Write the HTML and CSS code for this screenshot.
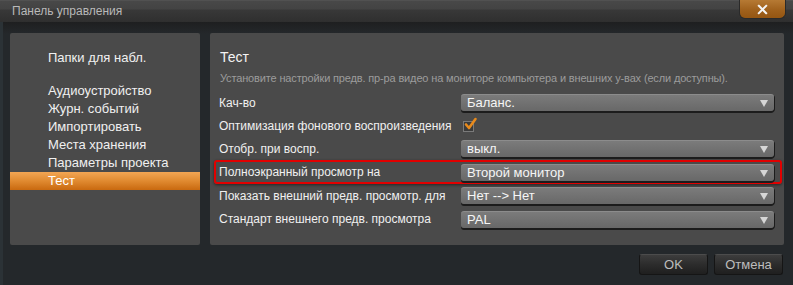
FILE: index.html
```html
<!DOCTYPE html>
<html lang="ru">
<head>
    <meta charset="UTF-8">
    <title>Панель управления</title>
    <link rel="stylesheet" href="styles.css">
</head>
<body>
    <div class="window">
        <div class="titlebar">
            <span class="title">Панель управления</span>
            <button class="close-btn" type="button">
                <svg width="11" height="11" viewBox="0 0 12 12"><path d="M2 2 L10 10 M10 2 L2 10" stroke="#f4f4f4" stroke-width="2.2" stroke-linecap="square"/></svg>
            </button>
        </div>

        <div class="content">
            <div class="panel nav">
                <div class="nav-item nav-first">Папки для набл.</div>
                <div class="nav-item">Аудиоустройство</div>
                <div class="nav-item">Журн. событий</div>
                <div class="nav-item">Импортировать</div>
                <div class="nav-item">Места хранения</div>
                <div class="nav-item">Параметры проекта</div>
                <div class="nav-item active">Тест</div>
            </div>

            <div class="panel settings">
                <h2>Тест</h2>
                <p class="desc">Установите настройки предв. пр-ра видео на мониторе компьютера и внешних у-вах (если доступны).</p>

                <div class="row">
                    <span class="label">Кач-во</span>
                    <div class="select">Баланс.</div>
                </div>
                <div class="row">
                    <span class="label">Оптимизация фонового воспроизведения</span>
                    <span class="checkbox">
                        <svg width="16" height="16" viewBox="0 0 16 16"><path d="M4 8.5 L7 12 L13.5 3" fill="none" stroke="#e88a1c" stroke-width="2.6" stroke-linecap="round" stroke-linejoin="round"/></svg>
                    </span>
                </div>
                <div class="row">
                    <span class="label">Отобр. при воспр.</span>
                    <div class="select">выкл.</div>
                </div>
                <div class="row row-tall highlight">
                    <span class="label">Полноэкранный просмотр на</span>
                    <div class="select">Второй монитор</div>
                </div>
                <div class="row">
                    <span class="label">Показать внешний предв. просмотр. для</span>
                    <div class="select">Нет --&gt; Нет</div>
                </div>
                <div class="row row-tall">
                    <span class="label">Стандарт внешнего предв. просмотра</span>
                    <div class="select">PAL</div>
                </div>
            </div>
        </div>

        <div class="footer">
            <button class="btn" type="button">OK</button>
            <button class="btn" type="button">Отмена</button>
        </div>
    </div>
</body>
</html>
```

FILE: styles.css
```css
* {
    margin: 0;
    padding: 0;
    box-sizing: border-box;
}

body {
    font-family: 'Liberation Sans', Arial, sans-serif;
    background: #24282b;
    width: 793px;
    height: 285px;
    overflow: hidden;
}

.window {
    height: 285px;
    background: linear-gradient(#1e1f20 22px, #24282b 34px);
    border-left: 3px solid #2b3236;
}

.titlebar {
    height: 22px;
    display: flex;
    align-items: flex-start;
    justify-content: space-between;
    background: linear-gradient(#5a5a5a 0, #484848 1px, #434343 9px, #383838 10px, #2f2f2f 22px);
    margin-left: -3px;
}

.title {
    color: #b9b9b9;
    font-size: 12px;
    line-height: 22px;
    padding-left: 12px;
}

.close-btn {
    width: 47px;
    height: 19px;
    margin-right: 7px;
    border: 1px solid #2a2a2a;
    border-top: none;
    border-radius: 0 0 6px 6px;
    background: linear-gradient(#b67a34, #a0611c 55%, #955612);
    display: flex;
    align-items: center;
    justify-content: center;
}

.content {
    display: flex;
    gap: 10px;
    padding: 11px 9px 0 7px;
}

.panel {
    background: #4a4a4a;
    border-radius: 2px;
    height: 212px;
}

.nav {
    width: 190px;
    padding-top: 16px;
}

.nav-item {
    color: #f0f0f0;
    font-size: 13px;
    line-height: 18px;
    padding-left: 38px;
}

.nav-first {
    margin-bottom: 15px;
}

.nav-item.active {
    color: #fff;
    background: linear-gradient(#f3a654, #e08a30 50%, #c9690f);
    height: 18px;
}

.settings {
    flex: 1;
    padding: 15px 2px 0 4px;
}

.settings h2 {
    color: #f4f4f4;
    font-size: 14px;
    font-weight: normal;
    line-height: 18px;
    padding-left: 6px;
    margin-bottom: 5px;
}

.desc {
    color: #9c9c9c;
    font-size: 11px;
    letter-spacing: -0.15px;
    line-height: 14px;
    padding-left: 6px;
    margin-bottom: 6px;
}

.row {
    height: 23px;
    display: flex;
    align-items: center;
    border: 2px solid transparent;
    border-radius: 3px;
    padding: 0 6px 0 3px;
}

.row-tall {
    height: 24px;
}

.row.highlight {
    border-color: #e10000;
    box-shadow: 0 1px 3px rgba(0, 0, 0, 0.5);
}

.label {
    width: 242px;
    color: #f0f0f0;
    font-size: 12px;
    white-space: nowrap;
}

.select {
    position: relative;
    flex: 1;
    height: 17px;
    line-height: 16px;
    padding-left: 6px;
    color: #f6f6f6;
    font-size: 13px;
    border-radius: 3px;
    border-top: 1px solid #8c8c8c;
    background: linear-gradient(#7b7b7b, #686868);
    box-shadow: 0 2px 0 #1c1c1c, 1px 1px 0 #1c1c1c;
}

.select::after {
    content: "";
    position: absolute;
    right: 6px;
    top: 5px;
    border-left: 4px solid transparent;
    border-right: 4px solid transparent;
    border-top: 7px solid #d6d6d6;
}

.checkbox {
    position: relative;
    width: 11px;
    height: 11px;
    margin-left: 2px;
    margin-top: 1px;
    border: 1px solid #7a7a7a;
    background: #3b3b3b;
}

.checkbox svg {
    position: absolute;
    left: -2px;
    top: -6px;
}

.footer {
    display: flex;
    justify-content: flex-end;
    gap: 6px;
    padding: 9px 10px 0 0;
}

.btn {
    width: 69px;
    height: 21px;
    font-family: 'Liberation Sans', Arial, sans-serif;
    font-size: 13px;
    color: #bdbdbd;
    border: 1px solid #151515;
    border-top-color: #4c4c4c;
    border-radius: 3px;
    background: linear-gradient(#3d3d3d, #2c2c2c 50%, #1f1f1f);
}
```
